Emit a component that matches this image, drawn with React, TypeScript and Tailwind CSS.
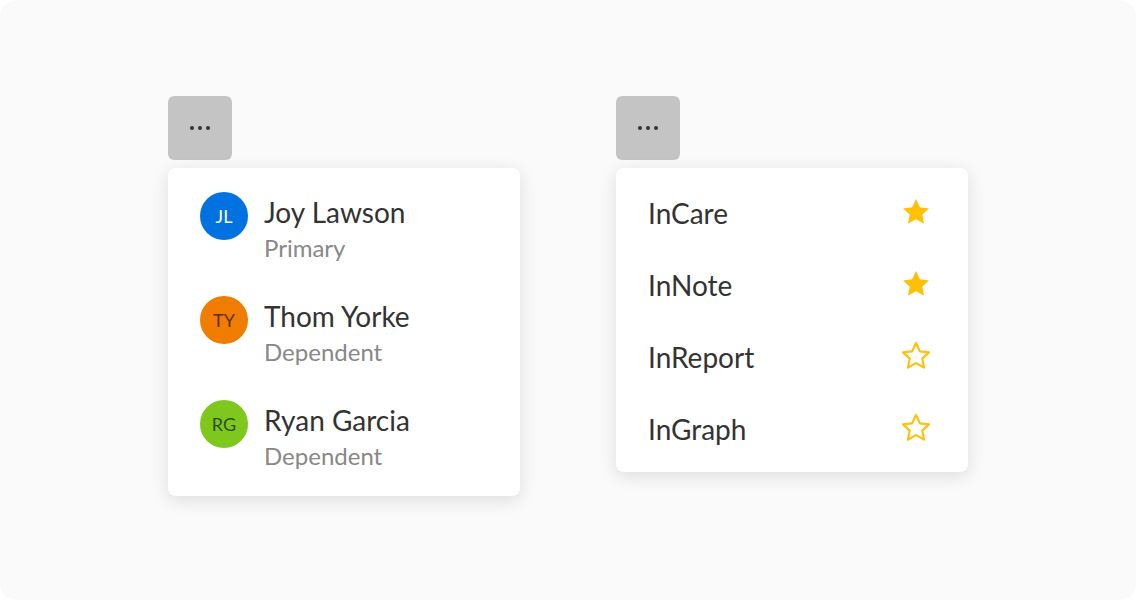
import type { ReactNode } from "react";

type Person = { initials: string; name: string; role: string; bg: string; fg: string };

const people: Person[] = [
  { initials: "JL", name: "Joy Lawson", role: "Primary", bg: "bg-[#0272e0]", fg: "text-white" },
  { initials: "TY", name: "Thom Yorke", role: "Dependent", bg: "bg-[#f07c00]", fg: "text-[#5e2c00]" },
  { initials: "RG", name: "Ryan Garcia", role: "Dependent", bg: "bg-[#7ec81e]", fg: "text-[#2e4d0a]" },
];

const apps = [
  { name: "InCare", fav: true },
  { name: "InNote", fav: true },
  { name: "InReport", fav: false },
  { name: "InGraph", fav: false },
];

function MoreButton() {
  return (
    <button
      type="button"
      className="flex h-16 w-16 items-center justify-center gap-1 rounded-[6px] bg-[#c4c4c4]"
    >
      <span className="h-1 w-1 rounded-full bg-[#333]" />
      <span className="h-1 w-1 rounded-full bg-[#333]" />
      <span className="h-1 w-1 rounded-full bg-[#333]" />
    </button>
  );
}

function Menu({ children }: { children: ReactNode }) {
  return (
    <div className="mt-2 w-[352px] rounded-[8px] bg-white py-2 shadow-[0_4px_18px_rgba(0,0,0,0.12)]">
      {children}
    </div>
  );
}

function Star({ filled }: { filled: boolean }) {
  const d =
    "M12 2.8l2.75 5.9 6.45.75-4.78 4.4 1.28 6.37L12 17.05 6.3 20.22l1.28-6.37L2.8 9.45l6.45-.75z";
  return (
    <svg width="34" height="34" viewBox="0 0 24 24" aria-hidden>
      {filled ? (
        <path d={d} fill="#ffc107" />
      ) : (
        <path d={d} fill="none" stroke="#ffc107" strokeWidth="1.5" strokeLinejoin="round" />
      )}
    </svg>
  );
}

export default function App() {
  return (
    <div className="h-[600px] w-[1136px] bg-white font-['Lato','Open_Sans',sans-serif] text-[#333]">
      <div className="flex h-full gap-24 rounded-2xl bg-[#fafafa] pl-[168px] pt-24">
        {/* accounts */}
        <div className="flex flex-col">
          <MoreButton />
          <Menu>
            {people.map((p) => (
              <div key={p.name} className="flex gap-4 px-8 py-4">
                <div
                  className={`flex h-12 w-12 shrink-0 items-center justify-center rounded-full text-[18px] ${p.bg} ${p.fg}`}
                >
                  {p.initials}
                </div>
                <div className="flex flex-col">
                  <div className="text-[28px] leading-[40px] text-[#333]">{p.name}</div>
                  <div className="text-[24px] leading-[32px] text-[#888]">{p.role}</div>
                </div>
              </div>
            ))}
          </Menu>
        </div>

        {/* apps */}
        <div className="flex flex-col">
          <MoreButton />
          <Menu>
            {apps.map((a) => (
              <div key={a.name} className="flex h-[72px] items-center justify-between pl-8 pr-[35px]">
                <span className="pt-[1px] text-[28px] text-[#333]">{a.name}</span>
                <Star filled={a.fav} />
              </div>
            ))}
          </Menu>
        </div>
      </div>
    </div>
  );
}
